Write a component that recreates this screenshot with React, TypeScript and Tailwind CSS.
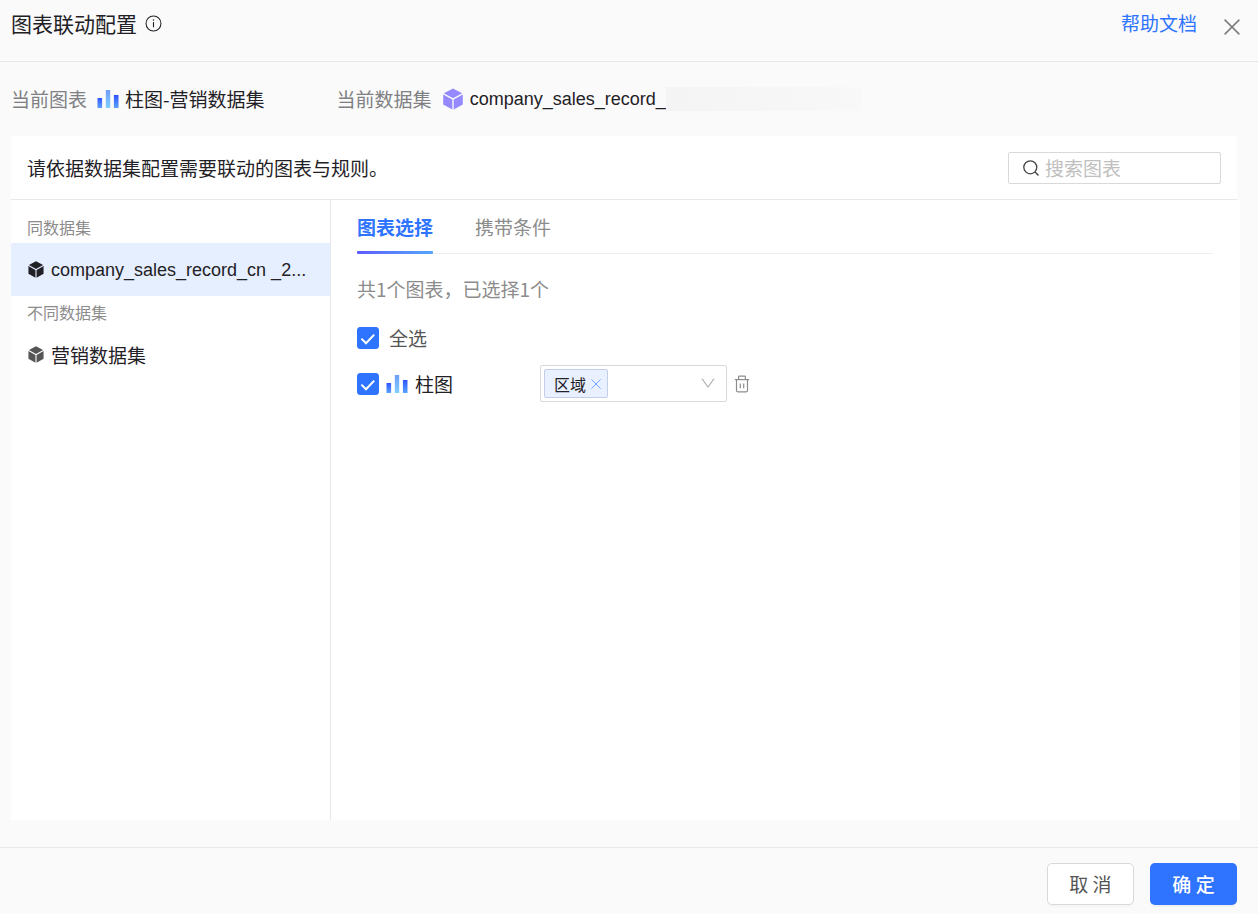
import { useState } from "react";

interface IconProps {
  className?: string;
}

const CubeIcon = ({ className }: IconProps) => (
  <svg viewBox="0 0 20 22" className={className} fill="currentColor" aria-hidden="true">
    <path d="M10 0.4 19.2 5.2 10 10.2 0.8 5.2Z" />
    <path d="M0.2 6.6 9.3 11.6V21.6L0.2 16.6Z" />
    <path d="M19.8 6.6 10.7 11.6V21.6L19.8 16.6Z" />
  </svg>
);

const BarChartIcon = ({ className }: IconProps) => (
  <svg viewBox="0 0 22 18" className={className} aria-hidden="true">
    <defs>
      <linearGradient id="barSide" x1="0" y1="0" x2="0" y2="1">
        <stop offset="0" stopColor="#2f54ff" />
        <stop offset="1" stopColor="#5aa2ff" />
      </linearGradient>
      <linearGradient id="barMiddle" x1="0" y1="0" x2="0" y2="1">
        <stop offset="0" stopColor="#6f9cf8" />
        <stop offset="1" stopColor="#7fd0ff" />
      </linearGradient>
    </defs>
    <rect x="0.5" y="8" width="4.6" height="10" fill="url(#barSide)" />
    <rect x="8.8" y="0" width="4.4" height="18" fill="url(#barMiddle)" />
    <rect x="16.9" y="5" width="4.6" height="13" fill="url(#barSide)" />
  </svg>
);

const InfoIcon = ({ className }: IconProps) => (
  <svg viewBox="0 0 18 18" className={className} fill="none" stroke="currentColor" aria-hidden="true">
    <circle cx="9" cy="9" r="7.9" strokeWidth="1.1" />
    <path d="M9 7.5V13" strokeWidth="1.2" />
    <circle cx="9" cy="5.4" r="0.8" fill="currentColor" stroke="none" />
  </svg>
);

const CloseIcon = ({ className }: IconProps) => (
  <svg viewBox="0 0 16 16" className={className} fill="none" stroke="currentColor" aria-hidden="true">
    <path d="M0.6 0.6 15.4 15.4M15.4 0.6 0.6 15.4" strokeWidth="1.5" />
  </svg>
);

const SearchIcon = ({ className }: IconProps) => (
  <svg viewBox="0 0 16 16" className={className} fill="none" stroke="currentColor" aria-hidden="true">
    <circle cx="7.3" cy="7.3" r="6.5" strokeWidth="1.3" />
    <path d="M12 12 15.5 15.5" strokeWidth="1.4" />
  </svg>
);

const ChevronIcon = ({ className }: IconProps) => (
  <svg viewBox="0 0 14 10" className={className} fill="none" stroke="currentColor" aria-hidden="true">
    <path d="M0.9 0.6 7 9 13.1 0.6" strokeWidth="1.2" />
  </svg>
);

const TrashIcon = ({ className }: IconProps) => (
  <svg viewBox="0 0 16 18" className={className} fill="none" stroke="currentColor" strokeWidth="1.2" aria-hidden="true">
    <path d="M0.8 4.6H15.2" />
    <path d="M4.6 4.4V1.8Q4.6 1.2 5.2 1.2H10.8Q11.4 1.2 11.4 1.8V4.4" />
    <path d="M2.5 4.8V15.6Q2.5 16.8 3.7 16.8H12.3Q13.5 16.8 13.5 15.6V4.8" />
    <path d="M6.3 8.4V13.2M9.7 8.4V13.2" />
  </svg>
);

interface CheckboxProps {
  id: string;
  checked: boolean;
  onChange: (value: boolean) => void;
}
const Checkbox = ({ id, checked, onChange }: CheckboxProps) => (
  <span className="relative flex h-[22px] w-[22px] shrink-0">
    <input
      id={id}
      type="checkbox"
      checked={checked}
      onChange={(e) => onChange(e.target.checked)}
      className="h-full w-full appearance-none rounded-[3px] border border-[#d9d9d9] bg-white checked:border-[#2e74ff] checked:bg-[#2e74ff]"
    />
    {checked && (
      <svg
        viewBox="0 0 22 22"
        className="pointer-events-none absolute inset-0"
        fill="none"
        stroke="#fff"
        strokeWidth="2"
        aria-hidden="true"
      >
        <path d="M4.4 11.6 9 16.2 17.2 7.6" />
      </svg>
    )}
  </span>
);

const datasetGroups = [
  {
    label: "同数据集",
    items: [{ id: "sales", name: "company_sales_record_cn _2..." }],
  },
  {
    label: "不同数据集",
    items: [{ id: "marketing", name: "营销数据集" }],
  },
];

const tabs = ["图表选择", "携带条件"];

const App = () => {
  const [activeDataset, setActiveDataset] = useState("sales");
  const [activeTab, setActiveTab] = useState(tabs[0]);
  const [search, setSearch] = useState("");
  const [checked, setChecked] = useState(true);
  const [showTag, setShowTag] = useState(true);

  return (
    <div className="flex min-h-screen flex-col bg-[#fafafa] font-['Noto_Sans_CJK_SC',sans-serif] text-[19px] leading-[28px] text-[#1f2126]">
      <header className="flex h-[62px] shrink-0 items-start justify-between border-b border-[#e8e8e8] pt-[9px] pr-[18px] pl-[11px]">
        <div className="flex items-center gap-2">
          <h1 className="text-[21px] leading-[28px]">图表联动配置</h1>
          <InfoIcon className="h-[17px] w-[17px]" />
        </div>
        <div className="flex items-start gap-[27px]">
          <a href="#help" className="text-[#2e74ff]">
            帮助文档
          </a>
          <button type="button" aria-label="关闭" className="pt-[10px] text-[#7c7c7c]">
            <CloseIcon className="h-4 w-4" />
          </button>
        </div>
      </header>

      <div className="flex h-[74px] shrink-0 items-center pl-[11px]">
        <span className="text-[#7f8083]">当前图表</span>
        <BarChartIcon className="mr-[6px] ml-[10px] h-[18px] w-[22px]" />
        <span>柱图-营销数据集</span>
        <span className="ml-[72px] text-[#7f8083]">当前数据集</span>
        <CubeIcon className="mr-[7px] ml-[11px] h-[22px] w-5 text-[#9489ff]" />
        <span className="font-['Liberation_Sans',sans-serif] text-[18px]">company_sales_record_</span>
        <span className="h-6 w-[195px] bg-linear-to-r from-[#f4f4f4] to-[#f8f8f8]" />
      </div>

      <div className="mr-[18px] mb-[27px] ml-[11px] flex grow flex-col">
        <div className="mr-[3px] flex h-16 shrink-0 items-center justify-between border-b border-[#e8e8e8] bg-white pr-4 pl-4">
          <p>请依据数据集配置需要联动的图表与规则。</p>
          <label className="flex h-8 w-[213px] items-center gap-[6px] rounded-[2px] border border-[#d9d9d9] bg-white px-[14px]">
            <SearchIcon className="h-4 w-4 shrink-0 text-[#444]" />
            <input
              type="text"
              aria-label="搜索图表"
              placeholder="搜索图表"
              value={search}
              onChange={(e) => setSearch(e.target.value)}
              className="w-full min-w-0 placeholder:text-[#bfbfbf] focus:outline-none"
            />
          </label>
        </div>

        <div className="flex grow bg-white">
          <nav className="w-[320px] shrink-0 border-r border-[#e8e8e8] pt-[11px]">
            {datasetGroups.map((group) => (
              <div key={group.label}>
                <div className="pl-4 text-base leading-[32px] text-[#8c8c8c]">{group.label}</div>
                {group.items.map((item) => (
                  <button
                    key={item.id}
                    type="button"
                    onClick={() => setActiveDataset(item.id)}
                    className={`flex h-[53px] w-full items-center gap-[7px] pl-[17px] text-left ${
                      activeDataset == item.id ? "bg-[#e6efff]" : ""
                    }`}
                  >
                    <CubeIcon
                      className={`h-[17px] w-4 shrink-0 ${
                        activeDataset == item.id ? "text-[#1f2126]" : "text-[#555]"
                      }`}
                    />
                    <span
                      className={`whitespace-nowrap ${
                        item.id == "sales" ? "font-['Liberation_Sans',sans-serif] text-[18px]" : ""
                      }`}
                    >
                      {item.name}
                    </span>
                  </button>
                ))}
              </div>
            ))}
          </nav>

          <main className="min-w-0 grow pr-[27px] pl-[26px]">
            <div role="tablist" className="flex h-[54px] gap-[42px] border-b border-[#f0f0f0]">
              {tabs.map((tab) => (
                <button
                  key={tab}
                  type="button"
                  role="tab"
                  aria-selected={activeTab == tab}
                  onClick={() => setActiveTab(tab)}
                  className={`relative flex pt-[13px] ${
                    activeTab == tab ? "font-bold text-[#2e74ff]" : "text-[#8c8c8c]"
                  }`}
                >
                  {tab}
                  {activeTab == tab && (
                    <span className="absolute inset-x-0 -bottom-px h-[3px] rounded-[1px] bg-linear-to-r from-[#5b5bff] to-[#55a6ff]" />
                  )}
                </button>
              ))}
            </div>

            <p className="mt-[21px] text-[#8c8c8c]">共1个图表，已选择1个</p>

            <div className="mt-[21px] flex items-center gap-[10px]">
              <Checkbox id="all" checked={checked} onChange={setChecked} />
              <label htmlFor="all" className="text-[#555]">
                全选
              </label>
            </div>

            <div className="mt-[13px] flex items-center">
              <Checkbox id="bar" checked={checked} onChange={setChecked} />
              <label htmlFor="bar" className="flex w-[161px] items-center gap-[7px] pl-[7px]">
                <BarChartIcon className="h-[18px] w-[22px]" />
                柱图
              </label>
              <div className="relative h-[37px] w-[187px]">
                <select
                  aria-label="联动字段"
                  defaultValue=""
                  onChange={() => setShowTag(true)}
                  className="h-full w-full appearance-none rounded-[2px] border border-[#d9d9d9] bg-white"
                >
                  <option value=""></option>
                </select>
                {showTag && (
                  <span className="absolute top-1 left-1 flex h-[29px] items-center gap-[5px] rounded-[2px] border border-[#c3cfe8] bg-[#e9f0ff] pr-[6px] pl-[9px] text-base">
                    区域
                    <button
                      type="button"
                      aria-label="移除区域"
                      onClick={() => setShowTag(false)}
                      className="text-[#6fa0ff]"
                    >
                      <CloseIcon className="h-[10px] w-[10px]" />
                    </button>
                  </span>
                )}
                <ChevronIcon className="pointer-events-none absolute top-[13px] right-3 h-[10px] w-[14px] text-[#b4b4b4]" />
              </div>
              <button type="button" aria-label="删除" className="ml-[7px] text-[#8c8c8c]">
                <TrashIcon className="h-[18px] w-4" />
              </button>
            </div>
          </main>
        </div>
      </div>

      <footer className="flex h-[67px] shrink-0 items-center justify-end gap-4 border-t border-[#e8e8e8] pt-[5px] pr-[21px]">
        <button
          type="button"
          className="h-[42px] w-[87px] rounded-[5px] border border-[#d9d9d9] bg-white text-[#555] shadow-[0_2px_0_rgba(0,0,0,0.02)]"
        >
          取 消
        </button>
        <button
          type="button"
          className="h-[42px] w-[87px] rounded-[5px] bg-[#2e74ff] font-medium text-white shadow-[0_2px_0_rgba(0,0,0,0.04)]"
        >
          确 定
        </button>
      </footer>
    </div>
  );
};

export default App;
